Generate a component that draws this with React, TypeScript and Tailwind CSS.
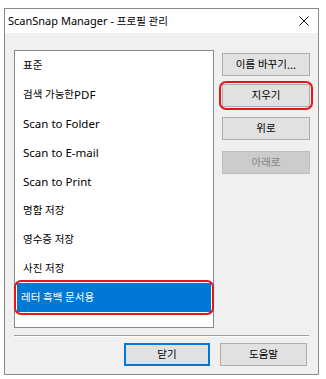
const profiles = [
  "표준",
  "검색 가능한 PDF",
  "Scan to Folder",
  "Scan to E-mail",
  "Scan to Print",
  "명함 저장",
  "영수증 저장",
  "사진 저장",
  "레터 흑백 문서용",
];

const font = { fontFamily: '"Noto Sans", "Noto Sans CJK KR", sans-serif' };

// Hangul renders wider in Noto than in the original UI font, so shrink those runs a bit
const Txt = ({ text }: { text: string }) => (
  <>
    {text.split(/([\uAC00-\uD7A3]+(?: [\uAC00-\uD7A3]+)*)/).map((part, i) =>
      /[\uAC00-\uD7A3]/.test(part) ? (
        <span key={i} className="text-[10.5px]">
          {part}
        </span>
      ) : (
        part
      )
    )}
  </>
);

const Button = ({
  label,
  disabled,
  primary,
  marked,
  className,
}: {
  label: string;
  disabled?: boolean;
  primary?: boolean;
  marked?: boolean;
  className?: string;
}) => (
  <div className={"relative " + (className ?? "")}>
    <div
      className={
        "flex h-[23px] items-center justify-center text-[11.5px] " +
        (disabled
          ? "border border-[#bfbfbf] bg-[#cccccc] text-[#838383]"
          : primary
          ? "border-2 border-[#0078d7] bg-[#e1e1e1] text-black"
          : "border border-[#adadad] bg-[#e1e1e1] text-black")
      }
    >
      <Txt text={label} />
    </div>
    {marked && (
      <div className="pointer-events-none absolute -inset-[3px] rounded-[7px] border-2 border-[#e8141c]" />
    )}
  </div>
);

export default function App() {
  const selected = profiles.length - 1;

  return (
    <div className="h-[379px] w-[326px] bg-white pl-[4px] pt-[8px]" style={font}>
      <div className="flex h-[367px] w-[315px] flex-col border border-[#8a8a8a]">
        {/* title bar */}
        <div className="flex h-[24px] items-center justify-between bg-white pl-[3px] pr-[8px]">
          <span className="text-[11px] text-black">
            <Txt text="ScanSnap Manager - 프로필 관리" />
          </span>
          <svg width="10" height="10" viewBox="0 0 10 10" className="mr-[1px]">
            <path d="M0.5 0.5 L9.5 9.5 M9.5 0.5 L0.5 9.5" stroke="#111" strokeWidth="1" />
          </svg>
        </div>

        {/* body */}
        <div className="flex flex-1 flex-col bg-[#f0f0f0] pl-[9px] pt-[17px]">
          <div className="flex">
            <div className="h-[278px] w-[200px] border border-[#828790] bg-white px-[2px]">
              {profiles.map((p, i) => (
                <div key={p} className="relative">
                  <div
                    className={
                      "flex h-[29px] items-center text-[11.5px] " +
                      (i === selected ? "bg-[#0078d7] pl-[4px] text-white" : "pl-[6px] text-black")
                    }
                  >
                    <Txt text={p} />
                  </div>
                  {i === selected && (
                    <div className="pointer-events-none absolute -inset-[3px] rounded-[7px] border-2 border-[#e8141c]" />
                  )}
                </div>
              ))}
            </div>

            <div className="ml-[8px] flex w-[88px] flex-col pt-[3px]">
              <Button label="이름 바꾸기..." />
              <Button label="지우기" marked className="mt-[8px]" />
              <Button label="위로" className="mt-[10px]" />
              <Button label="아래로" disabled className="mt-[11px]" />
            </div>
          </div>

          <div className="mt-[7px] w-[295px] border-t border-b border-t-[#a0a0a0] border-b-white" />

          <div className="mt-[6px] flex pl-[110px]">
            <Button label="닫기" primary className="w-[86px]" />
            <Button label="도움말" className="ml-[10px] w-[87px]" />
          </div>
        </div>
      </div>
    </div>
  );
}
